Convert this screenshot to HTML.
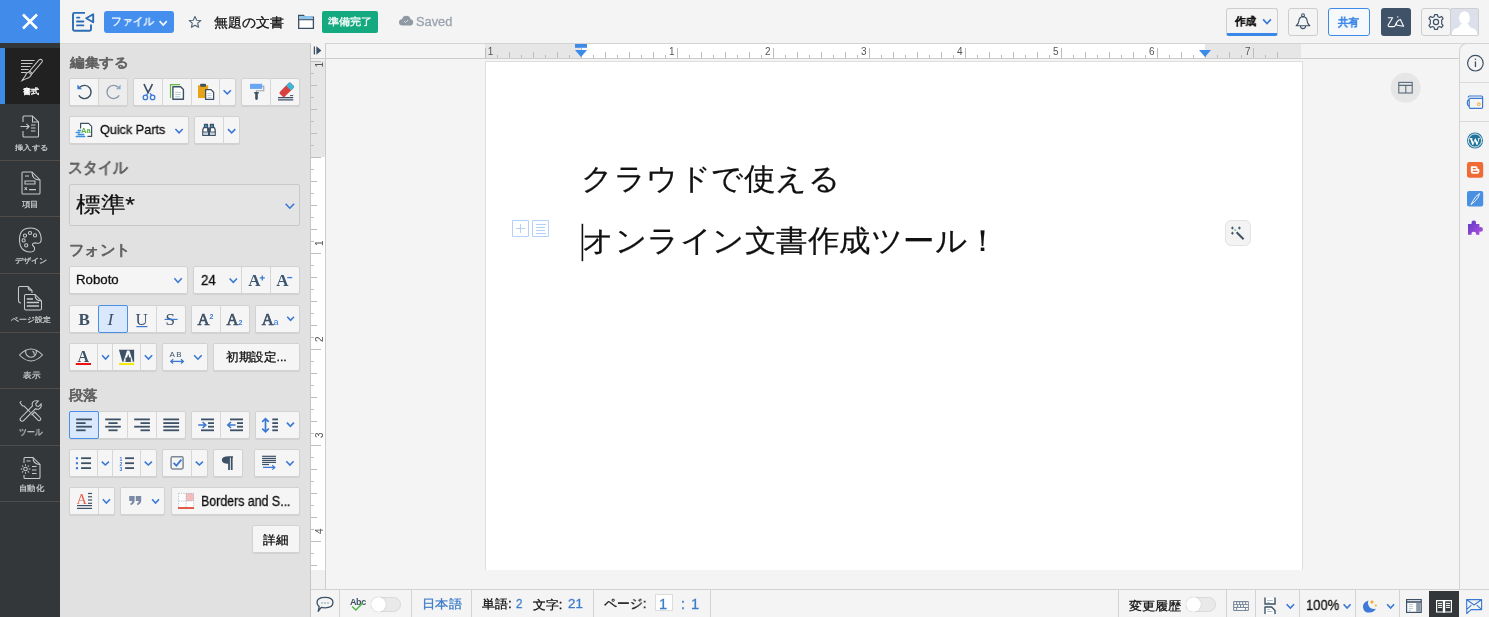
<!DOCTYPE html><html><head><meta charset="utf-8"><style>
*{box-sizing:border-box;margin:0;padding:0}
html,body{width:1489px;height:617px;overflow:hidden;background:#f4f4f4;font-family:"Liberation Sans",sans-serif;position:relative}
.a{position:absolute}
.t{white-space:nowrap;line-height:1;transform-origin:0 0;will-change:transform}
.bd{-webkit-text-stroke:0.3px currentColor}
.nos{-webkit-text-stroke:0}
.bds{-webkit-text-stroke:0.15px currentColor}
.grp,.btn{background:#f5f5f5;border:1px solid #d2d2d2;border-radius:2px;box-shadow:0 1px 1px rgba(0,0,0,0.07)}
.act{background:#d9e8fc;border:1.5px solid #4a8fe6;border-radius:2px}
.tb{background:#f4f4f4;border:1px solid #cdcdcd;border-radius:3px}
</style></head><body>
<div class="a" style="left:0;top:0;width:1489px;height:44px;background:#f4f4f4;border-bottom:1px solid #d9d9d9"></div>
<div class="a" style="left:0;top:0;width:60px;height:43px;background:#418bea"></div>
<div class="a" style="left:104px;top:11px;width:70px;height:22px;background:#448fee;border-radius:3px"></div>
<div class="a" style="left:322px;top:11px;width:56px;height:22px;background:#14a97f;border-radius:2px"></div>
<div class="a tb" style="left:1226px;top:8px;width:52px;height:28px;border-bottom:3px solid #3a87e8"></div>
<div class="a tb" style="left:1288px;top:8px;width:30px;height:28px"></div>
<div class="a" style="left:1328px;top:8px;width:42px;height:28px;border:1.5px solid #3d8ae8;border-radius:3px;background:#f6f8fb"></div>
<div class="a" style="left:1381px;top:8px;width:30px;height:28px;background:#3f5267;border-radius:3px"></div>
<div class="a tb" style="left:1421px;top:8px;width:30px;height:28px"></div>
<div class="a" style="left:1450px;top:8px;width:29px;height:28px;background:#dbe0ea;border:1px solid #cfcfcf;border-radius:2px"></div>
<div class="a" style="left:0;top:43px;width:60px;height:574px;background:#33373a"></div>
<div class="a" style="left:0;top:48px;width:60px;height:56px;background:#212121"></div>
<div class="a" style="left:0;top:48px;width:5px;height:56px;background:#3d8be8"></div>
<div class="a" style="left:0;top:160px;width:60px;height:1px;background:#4f4c49"></div>
<div class="a" style="left:0;top:273px;width:60px;height:1px;background:#4f4c49"></div>
<div class="a" style="left:0;top:332px;width:60px;height:1px;background:#4f4c49"></div>
<div class="a" style="left:0;top:388px;width:60px;height:1px;background:#4f4c49"></div>
<div class="a" style="left:0;top:445px;width:60px;height:1px;background:#4f4c49"></div>
<div class="a" style="left:0;top:501px;width:60px;height:1px;background:#4f4c49"></div>
<div class="a" style="left:0;top:216px;width:60px;height:1px;background:#4f4c49"></div>
<div class="a" style="left:60px;top:44px;width:251px;height:573px;background:#e1e1e1;border-right:1px solid #c6c6c6"></div>
<div class="a grp" style="left:69px;top:78px;width:59px;height:28px;"></div><div class="a" style="left:99px;top:79px;width:28px;height:26px;background:#ececec"></div><div class="a" style="left:98px;top:78px;width:1px;height:28px;background:#d6d6d6"></div>
<div class="a grp" style="left:133px;top:78px;width:103px;height:28px;"></div><div class="a" style="left:162px;top:78px;width:1px;height:28px;background:#d6d6d6"></div><div class="a" style="left:191px;top:78px;width:1px;height:28px;background:#d6d6d6"></div><div class="a" style="left:219px;top:78px;width:1px;height:28px;background:#d6d6d6"></div>
<div class="a grp" style="left:241px;top:78px;width:59px;height:28px;"></div><div class="a" style="left:270px;top:78px;width:1px;height:28px;background:#d6d6d6"></div>
<div class="a btn" style="left:69px;top:116px;width:120px;height:28px;"></div>
<div class="a grp" style="left:194px;top:116px;width:46px;height:28px;"></div><div class="a" style="left:223px;top:116px;width:1px;height:28px;background:#d6d6d6"></div>
<div class="a" style="left:69px;top:184px;width:231px;height:42px;background:#e4e4e4;border:1px solid #c9c9c9;border-radius:2px"></div>
<div class="a btn" style="left:69px;top:266px;width:119px;height:28px;"></div>
<div class="a grp" style="left:193px;top:266px;width:107px;height:28px;"></div><div class="a" style="left:241px;top:266px;width:1px;height:28px;background:#d6d6d6"></div><div class="a" style="left:270px;top:266px;width:1px;height:28px;background:#d6d6d6"></div>
<div class="a grp" style="left:69px;top:305px;width:117px;height:28px;"></div><div class="a" style="left:98px;top:305px;width:1px;height:28px;background:#d6d6d6"></div><div class="a" style="left:127px;top:305px;width:1px;height:28px;background:#d6d6d6"></div><div class="a" style="left:156px;top:305px;width:1px;height:28px;background:#d6d6d6"></div><div class="a act" style="left:98px;top:305px;width:30px;height:28px"></div>
<div class="a grp" style="left:191px;top:305px;width:59px;height:28px;"></div><div class="a" style="left:220px;top:305px;width:1px;height:28px;background:#d6d6d6"></div>
<div class="a btn" style="left:255px;top:305px;width:45px;height:28px;"></div>
<div class="a grp" style="left:69px;top:343px;width:88px;height:28px;"></div><div class="a" style="left:97px;top:343px;width:1px;height:28px;background:#d6d6d6"></div><div class="a" style="left:112px;top:343px;width:1px;height:28px;background:#d6d6d6"></div><div class="a" style="left:140px;top:343px;width:1px;height:28px;background:#d6d6d6"></div>
<div class="a btn" style="left:162px;top:343px;width:46px;height:28px;"></div>
<div class="a btn" style="left:213px;top:343px;width:87px;height:28px;"></div>
<div class="a grp" style="left:69px;top:411px;width:117px;height:28px;"></div><div class="a" style="left:98px;top:411px;width:1px;height:28px;background:#d6d6d6"></div><div class="a" style="left:127px;top:411px;width:1px;height:28px;background:#d6d6d6"></div><div class="a" style="left:156px;top:411px;width:1px;height:28px;background:#d6d6d6"></div><div class="a act" style="left:69px;top:411px;width:30px;height:28px"></div>
<div class="a grp" style="left:191px;top:411px;width:59px;height:28px;"></div><div class="a" style="left:220px;top:411px;width:1px;height:28px;background:#d6d6d6"></div>
<div class="a btn" style="left:255px;top:411px;width:45px;height:28px;"></div>
<div class="a grp" style="left:69px;top:449px;width:88px;height:28px;"></div><div class="a" style="left:97px;top:449px;width:1px;height:28px;background:#d6d6d6"></div><div class="a" style="left:112px;top:449px;width:1px;height:28px;background:#d6d6d6"></div><div class="a" style="left:140px;top:449px;width:1px;height:28px;background:#d6d6d6"></div>
<div class="a grp" style="left:162px;top:449px;width:46px;height:28px;"></div><div class="a" style="left:191px;top:449px;width:1px;height:28px;background:#d6d6d6"></div>
<div class="a btn" style="left:213px;top:449px;width:30px;height:28px;"></div>
<div class="a btn" style="left:254px;top:449px;width:46px;height:28px;"></div>
<div class="a grp" style="left:69px;top:487px;width:46px;height:28px;"></div><div class="a" style="left:98px;top:487px;width:1px;height:28px;background:#d6d6d6"></div>
<div class="a btn" style="left:120px;top:487px;width:45px;height:28px;"></div>
<div class="a btn" style="left:171px;top:487px;width:129px;height:28px;"></div>
<div class="a btn" style="left:252px;top:525px;width:48px;height:28px;"></div>
<div class="a" style="left:311px;top:43px;width:1149px;height:16px;background:#f4f4f4;border-top:1px solid #d3d3d3;border-bottom:1px solid #cdcdcd"></div>
<div class="a" style="left:485px;top:44px;width:96px;height:14px;background:#e6e6e6"></div>
<div class="a" style="left:581px;top:44px;width:624px;height:14px;background:#fff"></div>
<div class="a" style="left:1205px;top:44px;width:96px;height:14px;background:#e6e6e6"></div>
<div class="a" style="left:311px;top:59px;width:15px;height:530px;background:#f0f0f0;border-right:1px solid #cdcdcd"></div>
<div class="a" style="left:311px;top:61px;width:14px;height:96px;background:#e6e6e6"></div>
<div class="a" style="left:311px;top:157px;width:14px;height:413px;background:#fff"></div>
<div class="a" style="left:311px;top:43px;width:15px;height:16px;background:#f4f4f4;border-right:1px solid #cdcdcd;border-bottom:1px solid #cdcdcd"></div>
<div class="a" style="left:485px;top:61px;width:818px;height:509px;background:#fff;border:1px solid #dedede;border-bottom:none"></div>
<div class="a" style="left:1459px;top:43px;width:30px;height:547px;background:#f4f4f4;border-left:1px solid #d3d3d3;border-top:1px solid #d3d3d3;border-top-left-radius:8px"></div>
<div class="a" style="left:1460px;top:82px;width:29px;height:1px;background:#d9d9d9"></div>
<div class="a" style="left:1460px;top:121px;width:29px;height:1px;background:#d9d9d9"></div>
<div class="a" style="left:311px;top:589px;width:1178px;height:28px;background:#f4f4f4;border-top:1px solid #d3d3d3"></div>
<div class="a" style="left:339px;top:590px;width:1px;height:27px;background:#d3d3d3"></div>
<div class="a" style="left:411px;top:590px;width:1px;height:27px;background:#d3d3d3"></div>
<div class="a" style="left:471px;top:590px;width:1px;height:27px;background:#d3d3d3"></div>
<div class="a" style="left:593px;top:590px;width:1px;height:27px;background:#d3d3d3"></div>
<div class="a" style="left:710px;top:590px;width:1px;height:27px;background:#d3d3d3"></div>
<div class="a" style="left:1118px;top:590px;width:1px;height:27px;background:#d3d3d3"></div>
<div class="a" style="left:1226px;top:590px;width:1px;height:27px;background:#d3d3d3"></div>
<div class="a" style="left:1255px;top:590px;width:1px;height:27px;background:#d3d3d3"></div>
<div class="a" style="left:1299px;top:590px;width:1px;height:27px;background:#d3d3d3"></div>
<div class="a" style="left:1355px;top:590px;width:1px;height:27px;background:#d3d3d3"></div>
<div class="a" style="left:1399px;top:590px;width:1px;height:27px;background:#d3d3d3"></div>
<div class="a" style="left:1429px;top:591px;width:30px;height:26px;background:#33373a"></div>
<div class="a" style="left:655px;top:594px;width:18px;height:17px;background:#fff;border:1px solid #dcdcdc"></div>
<div class="a" style="left:371px;top:597px;width:30px;height:15px;background:#e9e9e9;border:1px solid #d9d9d9;border-radius:8px"></div>
<div class="a" style="left:371px;top:597px;width:15px;height:15px;background:#fff;border-radius:50%;box-shadow:0 0 1px rgba(0,0,0,0.3)"></div>
<div class="a" style="left:1186px;top:597px;width:30px;height:15px;background:#e9e9e9;border:1px solid #d9d9d9;border-radius:8px"></div>
<div class="a" style="left:1186px;top:597px;width:15px;height:15px;background:#fff;border-radius:50%;box-shadow:0 0 1px rgba(0,0,0,0.3)"></div>
<div class="a" style="left:1225px;top:220px;width:26px;height:26px;background:#f3f3f3;border:1px solid #e3e3e3;border-radius:6px"></div>
<svg class="a" style="left:0;top:0;will-change:transform" width="1489" height="617" viewBox="0 0 1489 617"><path d="M23 14.5 L37 28.5 M37 14.5 L23 28.5" stroke="#fff" stroke-width="2.6"/><g fill="none" stroke="#2b6cb4" stroke-width="1.9"><path d="M85 12.9 H74.4 Q73 12.9 73 14.3 V29.3 Q73 30.7 74.4 30.7 H89.6 Q91 30.7 91 29.3 V24.6"/><path d="M86.2 18.2 L93.2 14.2 V22.2 Z" stroke-linejoin="round"/><path d="M77 17.6 H79.4 M77 21.5 H83.4 M77 25.4 H83.4" stroke-linecap="round"/></g><polyline points="159.6,21.1 163.2,25.0 166.8,21.1" fill="none" stroke="#fff" stroke-width="1.6"/><path d="M195 16.4 L196.7 20.2 L200.8 20.5 L197.7 23.2 L198.6 27.3 L195 25.2 L191.4 27.3 L192.3 23.2 L189.2 20.5 L193.3 20.2 Z" fill="none" stroke="#4d6378" stroke-width="1.1" stroke-linejoin="round"/><path d="M298.7 15.5 H303.5 L305 17.1 H313.4 V28.3 H298.7 Z" fill="#fff" stroke="#3b4d63" stroke-width="1.3"/><rect x="299.4" y="16.2" width="13.3" height="3" fill="#8ac6f0"/><path d="M298.7 19.7 H313.4" stroke="#3b4d63" stroke-width="1.1"/><path d="M402.6 25.4 Q399 25.4 399 22.2 Q399 19.4 402 19.2 Q403 15.8 406.4 15.8 Q409.8 15.8 410.5 19.2 Q413.2 19.5 413.2 22.3 Q413.2 25.4 410.2 25.4 Z" fill="#8e99a4"/><polyline points="404.2,21.2 405.6,22.6 408.2,20" fill="none" stroke="#eaeaea" stroke-width="0.9"/><polyline points="1263.1,19.400000000000002 1267.0,23.599999999999998 1270.9,19.400000000000002" fill="none" stroke="#3a78d4" stroke-width="1.7"/><g fill="none" stroke="#3d5166" stroke-width="1.1" stroke-linejoin="round"><path d="M1303 16.6 Q1299 16.8 1298.8 21.4 Q1298.6 24 1296.2 25.8 H1309.8 Q1307.4 24 1307.2 21.4 Q1307 16.8 1303 16.6 Z"/><path d="M1300.4 26 A2.6 2.6 0 0 0 1305.6 26"/><circle cx="1303" cy="15.2" r="1.4"/></g><g fill="none" stroke="#fff" stroke-width="1.1" stroke-linejoin="round" stroke-linecap="round"><path d="M1388.2 17.8 H1392.6 L1388.2 25 Q1387.8 26.6 1389.6 26.6 H1393.6 Q1394.8 26.6 1395.4 25.2 L1396.6 22.4"/><path d="M1396 24.6 Q1396.6 20.6 1400.4 19.4 L1403.6 26.2 Q1400 25.8 1396.6 25"/></g><circle cx="1397.8" cy="17" r="0.7" fill="#fff"/><g fill="none" stroke="#3d5166" stroke-width="1.2" stroke-linejoin="round"><circle cx="1436" cy="22" r="2.6"/><path d="M1434.6 14.6 H1437.4 L1437.9 16.7 L1439.6 17.5 L1441.5 16.4 L1443.1 18.6 L1441.6 20.2 L1441.8 22 L1441.6 23.8 L1443.1 25.4 L1441.5 27.6 L1439.6 26.5 L1437.9 27.3 L1437.4 29.4 H1434.6 L1434.1 27.3 L1432.4 26.5 L1430.5 27.6 L1428.9 25.4 L1430.4 23.8 L1430.2 22 L1430.4 20.2 L1428.9 18.6 L1430.5 16.4 L1432.4 17.5 L1434.1 16.7 Z"/></g><ellipse cx="1464.5" cy="18" rx="5.4" ry="6.8" fill="#fff"/><path d="M1451.6 35 Q1452 28.6 1458.6 27.6 L1461 24 H1468 L1470.4 27.6 Q1477 28.6 1477.4 35 Z" fill="#fff"/><g fill="none" stroke="#c9c9c9" stroke-width="1.05"><path d="M21 60.4 H34.6 M21 63.4 H32.6 M21 66.4 H30.6 M21 69.4 H28.6 M21 72.4 H26.6"/><path d="M40.4 59.2 Q42.8 59.4 42.2 61.8 L31.4 74.6 L28.6 72.2 L39 60 Z"/><path d="M29.8 71.2 L32.4 73.6 M28.6 72.2 Q26.2 72.4 25.6 75.4 L22 80.6 L26.6 78.4 Q30 78 31.4 74.6"/></g><g fill="none" stroke="#c9c9c9" stroke-width="1.05"><path d="M23 122 V117 Q23 116 24 116 H32.5 L38.5 122 V136 Q38.5 137 37.5 137 H24 Q23 137 23 136 V131"/><path d="M32.5 116 V122 H38.5"/><path d="M20.5 126.5 H29 M26.4 123.8 L29.2 126.5 L26.4 129.2 M31 125 H35.5 M31 128 H35.5 M31 131 H35.5"/></g><g fill="none" stroke="#c9c9c9" stroke-width="1.05"><path d="M22 173 Q22 172 23 172 H32 L40 180 V193 Q40 194 39 194 H23 Q22 194 22 193 Z"/><path d="M32 172 Q32 180 40 180"/><path d="M25 176 H29 M25 181 H35 V184 H25 Z M24.6 187.4 L27 189.8 M27 187.4 L24.6 189.8 M29 189.6 H36"/></g><g fill="none" stroke="#c9c9c9" stroke-width="1.05"><path d="M30.5 228 Q19.5 228 19.5 239.5 Q19.5 251.5 30 252 Q34 252 34.6 249.5 Q35 247 33 245.8 Q31.6 244.2 33.6 243.2 Q35 242.6 37 243.2 Q41 244 41.2 239.5 Q41 228 30.5 228 Z"/><circle cx="25" cy="235.6" r="1.6"/><circle cx="30" cy="233" r="1.6"/><circle cx="35" cy="235.4" r="1.6"/><circle cx="23.6" cy="240.4" r="1.6"/><circle cx="26.2" cy="245.4" r="1.6"/></g><g fill="none" stroke="#c9c9c9" stroke-width="1.05"><path d="M21 303 Q18.5 303 18.5 300.5 V288 Q18.5 286.5 20 286.5 H28 L32 290.5 V293"/><path d="M28 286.5 Q28 290.5 32 290.5"/><path d="M24.5 296 Q24.5 294.5 26 294.5 H35 L41.5 301 V308.5 Q41.5 310 40 310 H26 Q24.5 310 24.5 308.5 Z"/><path d="M35 294.5 Q35 301 41.5 301"/><path d="M26.8 299 H33 M26.8 302.5 H39 M26.8 306 H39" stroke-width="1.6"/></g><g fill="none" stroke="#c9c9c9" stroke-width="1.05"><path d="M19.5 355 Q31 343 42.5 355 Q31 367 19.5 355 Z"/><path d="M36.2 350.4 A5.4 5.4 0 1 1 25.8 350.4"/><path d="M32.6 351 Q34.6 352.4 34.2 354.8"/></g><g fill="none" stroke="#c9c9c9" stroke-width="1.05"><path d="M21.5 401 L20 402.5 L22.5 406 L24.1 406.1 L30.5 412.5 M32.3 414.3 L37.7 419.9 Q39.1 421.3 40.3 420.1 Q41.5 418.9 40.1 417.5 L34.7 412.1 L31.5 415.1"/><path d="M38.3 401.1 L35.7 403.7 L36.3 405.9 L38.5 406.5 L41.1 403.9 Q41.9 407.7 38.9 408.9 Q37.1 409.5 35.5 408.7 L23.9 420.3 Q22.1 422.1 20.7 420.7 Q19.3 419.3 21.1 417.5 L32.5 405.9 Q31.7 404.1 32.5 402.5 Q34.1 400.1 38.3 401.1 Z"/></g><g fill="none" stroke="#c9c9c9" stroke-width="1.05"><path d="M24 463 V458.5 Q24 457.5 25 457.5 H33 L40 464.5 V477.5 Q40 478.5 39 478.5 H25 Q24 478.5 24 477.5 V475"/><path d="M33 457.5 Q33 464.5 40 464.5"/><path d="M26.5 461 H30.5 M32 466.5 H36.5 M32 470 H36.5 M32 473.5 H36.5"/><circle cx="25.5" cy="469" r="1.8"/><path d="M25.5 464.2 V465.8 M25.5 472.2 V473.8 M20.7 469 H22.3 M28.7 469 H30.3 M22.1 465.6 L23.2 466.7 M27.8 471.3 L28.9 472.4 M22.1 472.4 L23.2 471.3 M27.8 466.7 L28.9 465.6"/></g><path d="M79.8 87.3 A6.6 6.6 0 1 1 78.8 95.4" fill="none" stroke="#3d5166" stroke-width="1.4"/><path d="M77.4 84.6 V89.2 H82 Z" fill="#3a78d4"/><path d="M118.2 87.3 A6.6 6.6 0 1 0 119.2 95.4" fill="none" stroke="#8c98a5" stroke-width="1.3"/><path d="M120.6 84.6 V89.2 H116 Z" fill="#8fa8cf"/><path d="M144 84 Q146.5 90 148.6 93.2 M152.4 84 Q150 90 147.4 93.2" fill="none" stroke="#3d5166" stroke-width="1.7"/><circle cx="145.4" cy="97.4" r="2.2" fill="none" stroke="#3a78d4" stroke-width="1.3"/><circle cx="152.6" cy="97.4" r="2.2" fill="none" stroke="#3a78d4" stroke-width="1.3"/><path d="M146.4 95.4 L148 93 M151.6 95.4 L150 93" stroke="#3a78d4" stroke-width="1.2"/><path d="M170.5 98 V84.6 H180" fill="none" stroke="#66b946" stroke-width="1.2"/><path d="M172.9 86.8 H180.6 L183.4 89.6 V99.3 H172.9 Z" fill="#fff" stroke="#3d5166" stroke-width="1.4" stroke-linejoin="round"/><path d="M175.2 92.4 H181 M175.2 94.6 H181 M175.2 96.8 H180" stroke="#a9bcc6" stroke-width="0.9"/><rect x="198" y="85.3" width="10.2" height="12.7" fill="#e8a317"/><rect x="200.2" y="83.8" width="5.8" height="3" rx="0.8" fill="#3d5166"/><path d="M205.6 89.6 H211 L213.6 92.2 V99.4 H205.6 Z" fill="#fff" stroke="#3d5166" stroke-width="1.3" stroke-linejoin="round"/><path d="M207.4 93.6 H211.6 M207.4 95.6 H211.6 M207.4 97.6 H211.6" stroke="#a9bcc6" stroke-width="0.8"/><polyline points="223.6,90.3 227.25,93.9 230.9,90.3" fill="none" stroke="#3a78d4" stroke-width="1.6"/><rect x="250" y="83.8" width="12.2" height="5.1" fill="#6aa6f4"/><path d="M262.2 86.4 H263.8 V90.8 H256.5 V92.2" fill="none" stroke="#9aa6b2" stroke-width="1.1"/><path d="M254.2 92 H258.8 V93.6 H257.8 V99 Q256.5 101 255.2 99 V93.6 H254.2 Z" fill="#3d5166"/><g transform="rotate(-45 286.6 89.8)"><rect x="279" y="86.4" width="15.4" height="7" rx="1.6" fill="#d94141"/><rect x="289.2" y="86.4" width="5.2" height="7" rx="1.2" fill="#3ab7d9"/></g><path d="M278 97.6 H293.2 M278 99.8 H293.2" stroke="#3d5166" stroke-width="1.2"/><path d="M290 95.6 H293.2" stroke="#3d5166" stroke-width="1"/><path d="M80.6 123.4 H88.6 L91.6 126.4 V136.4 H80.6 Z" fill="#fff" stroke="none"/><path d="M80.6 128.4 V123.4 H88.6 L91.6 126.4 V136.4 H87.4" fill="none" stroke="#3d5166" stroke-width="1.2" stroke-linejoin="round"/><text x="81" y="132.9" font-family="Liberation Sans" font-weight="bold" font-size="7.6" fill="#5cb446">Aa</text><path d="M78.2 130.5 H80.8 M76.2 132.5 H79.8 M78.2 134.5 H83.8 M76.2 136.5 H84.8" stroke="#3a90e0" stroke-width="1.3" stroke-linecap="round"/><polyline points="175.4,129.0 179.05,132.8 182.70000000000002,129.0" fill="none" stroke="#3a78d4" stroke-width="1.6"/><g stroke="#3d5166" stroke-width="1.3" stroke-linejoin="round"><rect x="204.5" y="124.5" width="3" height="2.8" fill="#36b6e0"/><rect x="210.4" y="124.5" width="3" height="2.8" fill="#36b6e0"/><path d="M203.6 127.6 H207.8 V131 H208.6 V135.4 H202.8 V130 Z" fill="#fff"/><path d="M214.4 127.6 H210.2 V131 H209.4 V135.4 H215.2 V130 Z" fill="#fff"/></g><rect x="207.6" y="127.6" width="2.8" height="3.4" fill="#3d5166"/><rect x="203.6" y="132.6" width="4.2" height="2.2" fill="#c3cfd5"/><rect x="210.2" y="132.6" width="4.2" height="2.2" fill="#c3cfd5"/><path d="M202.8 132 H208.6 M209.4 132 H215.2" stroke="#3d5166" stroke-width="1.2"/><polyline points="228.0,129.1 231.65,132.8 235.3,129.1" fill="none" stroke="#3a78d4" stroke-width="1.6"/><polyline points="285.6,203.79999999999998 289.85,208.20000000000002 294.09999999999997,203.79999999999998" fill="none" stroke="#3a78d4" stroke-width="1.6"/><polyline points="174.4,278.20000000000005 178.05,282.4 181.70000000000002,278.20000000000005" fill="none" stroke="#3a78d4" stroke-width="1.6"/><polyline points="229.6,278.5 233.3,282.29999999999995 237.0,278.5" fill="none" stroke="#3a78d4" stroke-width="1.6"/><text x="248.2" y="286.2" font-family="Liberation Serif" font-weight="bold" font-size="17" fill="#3d5670">A</text><path d="M262.3 275.4 V280.4 M259.8 277.9 H264.8" stroke="#3a78d4" stroke-width="1.3"/><text x="276.2" y="286.2" font-family="Liberation Serif" font-weight="bold" font-size="17" fill="#3d5670">A</text><path d="M287.2 277.6 H292.2" stroke="#3a78d4" stroke-width="1.3"/><text x="78.4" y="325.2" font-family="Liberation Serif" font-weight="bold" font-size="17" fill="#3d5166">B</text><text x="107.4" y="325.2" font-family="Liberation Serif" font-style="italic" font-size="17.5" fill="#3d5166">I</text><text x="135.6" y="325.2" font-family="Liberation Serif" font-size="17" fill="#3d5166">U</text><path d="M136.4 326.6 H147.4" stroke="#3a78d4" stroke-width="1.2"/><text x="165.4" y="325.2" font-family="Liberation Serif" font-size="17" fill="#3d5166">S</text><path d="M164.6 319.4 H177.6" stroke="#3a78d4" stroke-width="1.2"/><text x="197.6" y="325.2" font-family="Liberation Serif" font-size="16.5" fill="#3d5166" stroke="#3d5166" stroke-width="0.7">A</text><text x="209.6" y="319" font-family="Liberation Sans" font-weight="bold" font-size="7" fill="#3a78d4">2</text><text x="226.6" y="325.2" font-family="Liberation Serif" font-size="16.5" fill="#3d5166" stroke="#3d5166" stroke-width="0.7">A</text><text x="238.6" y="325.4" font-family="Liberation Sans" font-weight="bold" font-size="7" fill="#3a78d4">2</text><text x="261.8" y="325.2" font-family="Liberation Serif" font-size="16.5" fill="#3d5166" stroke="#3d5166" stroke-width="0.7">A</text><text x="273.6" y="325.4" font-family="Liberation Sans" font-size="9" fill="#3a78d4">a</text><polyline points="287.20000000000005,316.8 290.6,320.4 294.0,316.8" fill="none" stroke="#3a78d4" stroke-width="1.6"/><text x="77.6" y="361.8" font-family="Liberation Serif" font-weight="bold" font-size="16" fill="#3d5166">A</text><rect x="75.8" y="363" width="15.2" height="2" fill="#ee1111"/><polyline points="102.1,355.3 105.55,359.0 109.0,355.3" fill="none" stroke="#3a78d4" stroke-width="1.6"/><path d="M118.9 349.8 H134.1 V361.8 H122.4 Z" fill="#3d5166"/><path d="M123.4 361.8 L127 350.6 H129.4 L133 361.8 H130.6 L128.2 354 L125.8 361.8 Z" fill="#f5f5f5"/><path d="M125.6 357.6 H130.8 V361.8 H125.6 Z" fill="#3d5166"/><rect x="119" y="363" width="15.2" height="2" fill="#f5e90a"/><polyline points="144.79999999999998,355.3 148.5,359.0 152.20000000000002,355.3" fill="none" stroke="#3a78d4" stroke-width="1.6"/><text x="169.6" y="356.8" font-family="Liberation Sans" font-size="8" fill="#3d5166" letter-spacing="1.2">AB</text><path d="M171 361.4 H183.2" stroke="#3a78d4" stroke-width="1.3"/><path d="M173.2 359.2 L170.8 361.4 L173.2 363.6 M181 359.2 L183.4 361.4 L181 363.6" fill="none" stroke="#3a78d4" stroke-width="1.3"/><polyline points="194.1,355.20000000000005 197.9,359.2 201.70000000000002,355.20000000000005" fill="none" stroke="#3a78d4" stroke-width="1.6"/><path d="M76.2 419.4 H91.9" stroke="#3d5166" stroke-width="1.8"/><path d="M76.2 423.1 H85.6" stroke="#3d5166" stroke-width="1.8"/><path d="M76.2 426.7 H91.9" stroke="#3d5166" stroke-width="1.8"/><path d="M76.2 430.3 H85.6" stroke="#3d5166" stroke-width="1.8"/><path d="M105.2 419.4 H120.8" stroke="#3d5166" stroke-width="1.8"/><path d="M108.4 423.1 H117.6" stroke="#3d5166" stroke-width="1.8"/><path d="M105.2 426.7 H120.8" stroke="#3d5166" stroke-width="1.8"/><path d="M108.4 430.3 H117.6" stroke="#3d5166" stroke-width="1.8"/><path d="M134.2 419.4 H149.9" stroke="#3d5166" stroke-width="1.8"/><path d="M140.5 423.1 H149.9" stroke="#3d5166" stroke-width="1.8"/><path d="M134.2 426.7 H149.9" stroke="#3d5166" stroke-width="1.8"/><path d="M140.5 430.3 H149.9" stroke="#3d5166" stroke-width="1.8"/><path d="M163.3 419.4 H179.1" stroke="#3d5166" stroke-width="1.8"/><path d="M163.3 423.1 H179.1" stroke="#3d5166" stroke-width="1.8"/><path d="M163.3 426.7 H179.1" stroke="#3d5166" stroke-width="1.8"/><path d="M163.3 430.3 H179.1" stroke="#3d5166" stroke-width="1.8"/><path d="M201 419.4 H214" stroke="#3d5166" stroke-width="1.8"/><path d="M208 423.1 H214" stroke="#3d5166" stroke-width="1.8"/><path d="M208 426.7 H214" stroke="#3d5166" stroke-width="1.8"/><path d="M201 430.3 H214" stroke="#3d5166" stroke-width="1.8"/><path d="M198.2 425 H205.6 M202.6 422 L205.8 425 L202.6 428" fill="none" stroke="#3a78d4" stroke-width="1.6"/><path d="M230 419.4 H243" stroke="#3d5166" stroke-width="1.8"/><path d="M237 423.1 H243" stroke="#3d5166" stroke-width="1.8"/><path d="M237 426.7 H243" stroke="#3d5166" stroke-width="1.8"/><path d="M230 430.3 H243" stroke="#3d5166" stroke-width="1.8"/><path d="M235.6 425 H228 M231 422 L227.8 425 L231 428" fill="none" stroke="#3a78d4" stroke-width="1.6"/><path d="M265.5 419 V431.4 M262.2 421.8 L265.5 418.6 L268.8 421.8 M262.2 428.6 L265.5 431.8 L268.8 428.6" fill="none" stroke="#3a78d4" stroke-width="1.7"/><path d="M272.3 419.4 H278" stroke="#3d5166" stroke-width="1.8"/><path d="M272.3 423.1 H278" stroke="#3d5166" stroke-width="1.8"/><path d="M272.3 426.7 H278" stroke="#3d5166" stroke-width="1.8"/><path d="M272.3 430.3 H278" stroke="#3d5166" stroke-width="1.8"/><polyline points="286.90000000000003,422.6 290.4,426.4 293.9,422.6" fill="none" stroke="#3a78d4" stroke-width="1.6"/><rect x="75.9" y="457.2" width="2.1" height="2.1" fill="#3a78d4"/><rect x="75.9" y="462.2" width="2.1" height="2.1" fill="#3a78d4"/><rect x="75.9" y="467.1" width="2.1" height="2.1" fill="#3a78d4"/><path d="M81.1 458.2 H91" stroke="#3d5166" stroke-width="1.8"/><path d="M81.1 463.2 H91" stroke="#3d5166" stroke-width="1.8"/><path d="M81.1 468.1 H91" stroke="#3d5166" stroke-width="1.8"/><polyline points="101.8,461.6 105.35,465.0 108.9,461.6" fill="none" stroke="#3a78d4" stroke-width="1.6"/><text x="119.4" y="461.2" font-family="Liberation Sans" font-weight="bold" font-size="5" fill="#3a78d4">1</text><text x="119.4" y="466" font-family="Liberation Sans" font-weight="bold" font-size="5" fill="#3a78d4">2</text><text x="119.4" y="470.6" font-family="Liberation Sans" font-weight="bold" font-size="5" fill="#3a78d4">3</text><path d="M125.1 458.2 H134" stroke="#3d5166" stroke-width="1.8"/><path d="M125.1 463.2 H134" stroke="#3d5166" stroke-width="1.8"/><path d="M125.1 468.1 H134" stroke="#3d5166" stroke-width="1.8"/><polyline points="144.7,461.6 148.3,465.0 151.9,461.6" fill="none" stroke="#3a78d4" stroke-width="1.6"/><rect x="171.1" y="456.8" width="12" height="12.2" rx="1.4" fill="none" stroke="#7d8894" stroke-width="1.5"/><path d="M173.6 462.8 L176.4 465.6 L181.4 459.6" fill="none" stroke="#3a78d4" stroke-width="1.8"/><polyline points="195.79999999999998,461.6 199.35,465.0 202.9,461.6" fill="none" stroke="#3a78d4" stroke-width="1.6"/><path d="M228.6 456.2 H233 V457.8 H232.6 V470 H230.8 V457.8 H229.9 V470 H228.1 V463.8 Q221.8 463.6 221.8 460 Q221.8 456.2 228.6 456.2 Z" fill="#3d5166"/><path d="M262.1 456.3 H276" stroke="#3d5166" stroke-width="1.2"/><path d="M262.1 458.4 H276" stroke="#3d5166" stroke-width="1.2"/><path d="M262.1 460.4 H276" stroke="#3d5166" stroke-width="1.2"/><path d="M262.1 462.4 H276" stroke="#3d5166" stroke-width="1.2"/><path d="M262.1 464.5 H269" stroke="#3d5166" stroke-width="1.2"/><path d="M263 467.4 H274.6 M272.2 465.2 L274.8 467.4 L272.2 469.6" fill="none" stroke="#3a78d4" stroke-width="1.2"/><polyline points="286.3,461.20000000000005 289.95,465.0 293.59999999999997,461.20000000000005" fill="none" stroke="#3a78d4" stroke-width="1.6"/><text x="76.4" y="503.6" font-family="Liberation Serif" font-size="14.5" fill="#e8604c">A</text><path d="M88 493.5 H92.1" stroke="#3d5166" stroke-width="1.2"/><path d="M88 496.8 H92.1" stroke="#3d5166" stroke-width="1.2"/><path d="M88 500 H92.1" stroke="#3d5166" stroke-width="1.2"/><path d="M88 503.3 H92.1" stroke="#3d5166" stroke-width="1.2"/><path d="M77 505.6 H92.1" stroke="#3d5166" stroke-width="1.2"/><path d="M77 508.4 H92.1" stroke="#3d5166" stroke-width="1.2"/><polyline points="102.8,499.3 106.4,503.0 110.0,499.3" fill="none" stroke="#3a78d4" stroke-width="1.6"/><path d="M129.2 496 H134.6 V500.6 Q134.6 504 131 505.2 L130.2 503.8 Q132 503 132.2 501 H129.2 Z M135.8 496 H141.2 V500.6 Q141.2 504 137.6 505.2 L136.8 503.8 Q138.6 503 138.8 501 H135.8 Z" fill="#7a8aa6"/><polyline points="152.1,499.3 155.55,503.0 159.0,499.3" fill="none" stroke="#3a78d4" stroke-width="1.6"/><rect x="178.4" y="493.2" width="15.4" height="15.4" fill="#fff"/><rect x="186" y="493.2" width="7.8" height="7.8" fill="#f3bcbc"/><path d="M178.6 493.4 H193.6 V508 M178.6 493.4 V508 M186 493.4 V508 M178.6 501 H193.6" fill="none" stroke="#9fb3bd" stroke-width="0.8" stroke-dasharray="1.2 1.2"/><rect x="178" y="507" width="16" height="2" fill="#e55b4a"/><rect x="485" y="48" width="1" height="10" fill="#bdbdbd"/><rect x="497" y="55" width="1" height="3" fill="#bdbdbd"/><rect x="509" y="52" width="1" height="6" fill="#bdbdbd"/><rect x="521" y="55" width="1" height="3" fill="#bdbdbd"/><rect x="533" y="52" width="1" height="6" fill="#bdbdbd"/><rect x="545" y="55" width="1" height="3" fill="#bdbdbd"/><rect x="557" y="52" width="1" height="6" fill="#bdbdbd"/><rect x="569" y="55" width="1" height="3" fill="#bdbdbd"/><rect x="581" y="48" width="1" height="10" fill="#bdbdbd"/><rect x="593" y="55" width="1" height="3" fill="#bdbdbd"/><rect x="605" y="52" width="1" height="6" fill="#bdbdbd"/><rect x="617" y="55" width="1" height="3" fill="#bdbdbd"/><rect x="629" y="52" width="1" height="6" fill="#bdbdbd"/><rect x="641" y="55" width="1" height="3" fill="#bdbdbd"/><rect x="653" y="52" width="1" height="6" fill="#bdbdbd"/><rect x="665" y="55" width="1" height="3" fill="#bdbdbd"/><rect x="677" y="48" width="1" height="10" fill="#bdbdbd"/><rect x="689" y="55" width="1" height="3" fill="#bdbdbd"/><rect x="701" y="52" width="1" height="6" fill="#bdbdbd"/><rect x="713" y="55" width="1" height="3" fill="#bdbdbd"/><rect x="725" y="52" width="1" height="6" fill="#bdbdbd"/><rect x="737" y="55" width="1" height="3" fill="#bdbdbd"/><rect x="749" y="52" width="1" height="6" fill="#bdbdbd"/><rect x="761" y="55" width="1" height="3" fill="#bdbdbd"/><rect x="773" y="48" width="1" height="10" fill="#bdbdbd"/><rect x="785" y="55" width="1" height="3" fill="#bdbdbd"/><rect x="797" y="52" width="1" height="6" fill="#bdbdbd"/><rect x="809" y="55" width="1" height="3" fill="#bdbdbd"/><rect x="821" y="52" width="1" height="6" fill="#bdbdbd"/><rect x="833" y="55" width="1" height="3" fill="#bdbdbd"/><rect x="845" y="52" width="1" height="6" fill="#bdbdbd"/><rect x="857" y="55" width="1" height="3" fill="#bdbdbd"/><rect x="869" y="48" width="1" height="10" fill="#bdbdbd"/><rect x="881" y="55" width="1" height="3" fill="#bdbdbd"/><rect x="893" y="52" width="1" height="6" fill="#bdbdbd"/><rect x="905" y="55" width="1" height="3" fill="#bdbdbd"/><rect x="917" y="52" width="1" height="6" fill="#bdbdbd"/><rect x="929" y="55" width="1" height="3" fill="#bdbdbd"/><rect x="941" y="52" width="1" height="6" fill="#bdbdbd"/><rect x="953" y="55" width="1" height="3" fill="#bdbdbd"/><rect x="965" y="48" width="1" height="10" fill="#bdbdbd"/><rect x="977" y="55" width="1" height="3" fill="#bdbdbd"/><rect x="989" y="52" width="1" height="6" fill="#bdbdbd"/><rect x="1001" y="55" width="1" height="3" fill="#bdbdbd"/><rect x="1013" y="52" width="1" height="6" fill="#bdbdbd"/><rect x="1025" y="55" width="1" height="3" fill="#bdbdbd"/><rect x="1037" y="52" width="1" height="6" fill="#bdbdbd"/><rect x="1049" y="55" width="1" height="3" fill="#bdbdbd"/><rect x="1061" y="48" width="1" height="10" fill="#bdbdbd"/><rect x="1073" y="55" width="1" height="3" fill="#bdbdbd"/><rect x="1085" y="52" width="1" height="6" fill="#bdbdbd"/><rect x="1097" y="55" width="1" height="3" fill="#bdbdbd"/><rect x="1109" y="52" width="1" height="6" fill="#bdbdbd"/><rect x="1121" y="55" width="1" height="3" fill="#bdbdbd"/><rect x="1133" y="52" width="1" height="6" fill="#bdbdbd"/><rect x="1145" y="55" width="1" height="3" fill="#bdbdbd"/><rect x="1157" y="48" width="1" height="10" fill="#bdbdbd"/><rect x="1169" y="55" width="1" height="3" fill="#bdbdbd"/><rect x="1181" y="52" width="1" height="6" fill="#bdbdbd"/><rect x="1193" y="55" width="1" height="3" fill="#bdbdbd"/><rect x="1205" y="52" width="1" height="6" fill="#bdbdbd"/><rect x="1217" y="55" width="1" height="3" fill="#bdbdbd"/><rect x="1229" y="52" width="1" height="6" fill="#bdbdbd"/><rect x="1241" y="55" width="1" height="3" fill="#bdbdbd"/><rect x="1253" y="48" width="1" height="10" fill="#bdbdbd"/><rect x="1265" y="55" width="1" height="3" fill="#bdbdbd"/><rect x="1277" y="52" width="1" height="6" fill="#bdbdbd"/><text x="674.5" y="54.9" text-anchor="end" font-family="Liberation Sans" font-size="10" fill="#555">1</text><text x="770.5" y="54.9" text-anchor="end" font-family="Liberation Sans" font-size="10" fill="#555">2</text><text x="866.5" y="54.9" text-anchor="end" font-family="Liberation Sans" font-size="10" fill="#555">3</text><text x="962.5" y="54.9" text-anchor="end" font-family="Liberation Sans" font-size="10" fill="#555">4</text><text x="1058.5" y="54.9" text-anchor="end" font-family="Liberation Sans" font-size="10" fill="#555">5</text><text x="1154.5" y="54.9" text-anchor="end" font-family="Liberation Sans" font-size="10" fill="#555">6</text><text x="1250.5" y="54.9" text-anchor="end" font-family="Liberation Sans" font-size="10" fill="#555">7</text><text x="487.8" y="54.9" font-family="Liberation Sans" font-size="10" fill="#555">1</text><rect x="575" y="44" width="12" height="3.8" fill="#3d8be8"/><path d="M575 50 H587 L581 57 Z" fill="#3d8be8"/><path d="M1199 50 H1211 L1205 57 Z" fill="#3d8be8"/><rect x="311" y="61" width="10" height="1" fill="#bdbdbd"/><rect x="311" y="73" width="3" height="1" fill="#bdbdbd"/><rect x="311" y="85" width="6" height="1" fill="#bdbdbd"/><rect x="311" y="97" width="3" height="1" fill="#bdbdbd"/><rect x="311" y="109" width="6" height="1" fill="#bdbdbd"/><rect x="311" y="121" width="3" height="1" fill="#bdbdbd"/><rect x="311" y="133" width="6" height="1" fill="#bdbdbd"/><rect x="311" y="145" width="3" height="1" fill="#bdbdbd"/><rect x="311" y="157" width="10" height="1" fill="#bdbdbd"/><rect x="311" y="169" width="3" height="1" fill="#bdbdbd"/><rect x="311" y="181" width="6" height="1" fill="#bdbdbd"/><rect x="311" y="193" width="3" height="1" fill="#bdbdbd"/><rect x="311" y="205" width="6" height="1" fill="#bdbdbd"/><rect x="311" y="217" width="3" height="1" fill="#bdbdbd"/><rect x="311" y="229" width="6" height="1" fill="#bdbdbd"/><rect x="311" y="241" width="3" height="1" fill="#bdbdbd"/><rect x="311" y="253" width="10" height="1" fill="#bdbdbd"/><rect x="311" y="265" width="3" height="1" fill="#bdbdbd"/><rect x="311" y="277" width="6" height="1" fill="#bdbdbd"/><rect x="311" y="289" width="3" height="1" fill="#bdbdbd"/><rect x="311" y="301" width="6" height="1" fill="#bdbdbd"/><rect x="311" y="313" width="3" height="1" fill="#bdbdbd"/><rect x="311" y="325" width="6" height="1" fill="#bdbdbd"/><rect x="311" y="337" width="3" height="1" fill="#bdbdbd"/><rect x="311" y="349" width="10" height="1" fill="#bdbdbd"/><rect x="311" y="361" width="3" height="1" fill="#bdbdbd"/><rect x="311" y="373" width="6" height="1" fill="#bdbdbd"/><rect x="311" y="385" width="3" height="1" fill="#bdbdbd"/><rect x="311" y="397" width="6" height="1" fill="#bdbdbd"/><rect x="311" y="409" width="3" height="1" fill="#bdbdbd"/><rect x="311" y="421" width="6" height="1" fill="#bdbdbd"/><rect x="311" y="433" width="3" height="1" fill="#bdbdbd"/><rect x="311" y="445" width="10" height="1" fill="#bdbdbd"/><rect x="311" y="457" width="3" height="1" fill="#bdbdbd"/><rect x="311" y="469" width="6" height="1" fill="#bdbdbd"/><rect x="311" y="481" width="3" height="1" fill="#bdbdbd"/><rect x="311" y="493" width="6" height="1" fill="#bdbdbd"/><rect x="311" y="505" width="3" height="1" fill="#bdbdbd"/><rect x="311" y="517" width="6" height="1" fill="#bdbdbd"/><rect x="311" y="529" width="3" height="1" fill="#bdbdbd"/><rect x="311" y="541" width="10" height="1" fill="#bdbdbd"/><rect x="311" y="553" width="3" height="1" fill="#bdbdbd"/><rect x="311" y="565" width="6" height="1" fill="#bdbdbd"/><text transform="translate(323.2 246) rotate(-90)" font-family="Liberation Sans" font-size="10" fill="#555">1</text><text transform="translate(323.2 342) rotate(-90)" font-family="Liberation Sans" font-size="10" fill="#555">2</text><text transform="translate(323.2 438) rotate(-90)" font-family="Liberation Sans" font-size="10" fill="#555">3</text><text transform="translate(323.2 534) rotate(-90)" font-family="Liberation Sans" font-size="10" fill="#555">4</text><text transform="translate(323.2 67.6) rotate(-90)" font-family="Liberation Sans" font-size="10" fill="#555">1</text><path d="M314.4 46.5 V54.5" stroke="#3d5166" stroke-width="1.3"/><path d="M316.4 46.2 L321.4 50.5 L316.4 54.8 Z" fill="#3d5166"/><circle cx="1405.6" cy="87.8" r="15" fill="#e6e6e6"/><rect x="1398.8" y="82.4" width="13.4" height="10.6" fill="none" stroke="#5a6b7c" stroke-width="1.1"/><path d="M1398.8 85.4 H1412.2 M1405.8 85.4 V93" stroke="#5a6b7c" stroke-width="1.1"/><path d="M1236.6 232.2 L1243.6 239.2" stroke="#3d5166" stroke-width="2"/><circle cx="1235.2" cy="230" r="1" fill="#5fd08a"/><path d="M1232.4 226.6 V229.4 M1231 228 H1233.8 M1239.4 226.6 V229.4 M1238 228 H1240.8 M1232.4 231.8 V234.6 M1231 233.2 H1233.8" stroke="#3d5166" stroke-width="1"/><g fill="none" stroke="#b3d1f6" stroke-width="1"><path d="M512.5 220.5 H528.5 V236.5 H512.5 Z M520.5 224 V233 M516 228.5 H525"/><path d="M532.5 220.5 H548.5 V236.5 H532.5 Z M536 224.5 H546 M536 227.5 H545 M536 230.5 H545 M536 233.5 H546"/></g><rect x="581.6" y="223.8" width="1.6" height="37.4" fill="#111"/><circle cx="1475.4" cy="63.2" r="7.8" fill="none" stroke="#3d5166" stroke-width="1.2"/><rect x="1474.8" y="61.4" width="1.3" height="5.6" fill="#3d5166"/><circle cx="1475.45" cy="59.2" r="0.75" fill="#3d5166"/><path d="M1469.4 96 H1481.4 Q1482.6 96 1482.6 97.2 V107.2 Q1482.6 108.4 1481.4 108.4 H1470.4 Q1469.2 108.4 1469.2 107.2 V98.4 M1469.4 96 Q1468.2 96 1468.2 97.4 M1469.2 99.6 Q1467 100 1467.4 104 Q1467.8 106 1469.2 106.2 M1469.4 98.4 H1482.2" fill="none" stroke="#3a78d4" stroke-width="1.2"/><circle cx="1478.8" cy="104.2" r="1.4" fill="none" stroke="#f5a623" stroke-width="1"/><circle cx="1475" cy="140.5" r="8" fill="#21759b"/><circle cx="1475" cy="140.5" r="6.6" fill="none" stroke="#fff" stroke-width="0.9"/><text x="1469.2" y="144.6" font-family="Liberation Serif" font-weight="bold" font-size="11" fill="#fff">W</text><rect x="1467" y="162" width="16.2" height="15.8" rx="2.4" fill="#f06a35"/><path d="M1471.4 166.2 H1475.8 Q1477.6 166.2 1477.6 168.2 V169 H1478.4 Q1479.4 169 1479.4 170.2 V171.6 Q1479.4 173.8 1477.2 173.8 H1473 Q1470.8 173.8 1470.8 171.6 V167 Q1470.8 166.2 1471.4 166.2 Z" fill="#fff"/><path d="M1473.2 168.6 H1475.4 M1473.2 171.4 H1477" stroke="#f06a35" stroke-width="1.1" stroke-linecap="round"/><rect x="1467" y="191" width="16.2" height="15.6" rx="2" fill="#4a90e2"/><path d="M1479.6 193.6 Q1475.6 195.6 1473.2 200.6 L1471 204.6 L1474.6 201.6 Q1478.6 198 1479.6 193.6 Z" fill="none" stroke="#fff" stroke-width="0.9"/><defs><linearGradient id="pz" x1="0" y1="0" x2="1" y2="1"><stop offset="0" stop-color="#5d39c9"/><stop offset="1" stop-color="#b152d9"/></linearGradient></defs><path d="M1468 224 H1471.6 Q1471 220.4 1473.8 220.4 Q1476.6 220.4 1476 224 H1479.4 V227.2 Q1483 226.6 1483 229.4 Q1483 232.2 1479.4 231.6 V234.8 H1476 Q1476.6 231.8 1473.8 231.8 Q1471 231.8 1471.6 234.8 H1468 Z" fill="url(#pz)"/><path d="M325 597.4 Q333 597.4 333 602.6 Q333 607.8 325 607.8 Q322.6 607.8 321.2 607.4 L318.2 611.4 L319.2 606.6 Q317 605.2 317 602.6 Q317 597.4 325 597.4 Z" fill="none" stroke="#3d5166" stroke-width="1.3" stroke-linejoin="round"/><path d="M321.2 603 H322.8 M324.2 603 H325.8 M327.2 603 H328.8" stroke="#98aeb9" stroke-width="1.6"/><text x="350" y="605.2" font-family="Liberation Sans" font-weight="bold" font-size="9" fill="#3d5166" letter-spacing="-0.4">Abc</text><path d="M352.2 606.6 L355.8 610 L363 602.8" fill="none" stroke="#4cb847" stroke-width="1.4"/><rect x="1233.1" y="601.1" width="15.8" height="9.8" rx="1" fill="#7a8a9a"/><g fill="#fff"><rect x="1234.2" y="602.2" width="1.9" height="1.9"/><rect x="1237.2" y="602.2" width="1.9" height="1.9"/><rect x="1240.2" y="602.2" width="1.9" height="1.9"/><rect x="1243.2" y="602.2" width="1.9" height="1.9"/><rect x="1246.2" y="602.2" width="1.9" height="1.9"/><rect x="1234.2" y="605.1" width="2.9" height="1.8"/><rect x="1238.1" y="605.1" width="1.9" height="1.8"/><rect x="1241.1" y="605.1" width="1.9" height="1.8"/><rect x="1244" y="605.1" width="3.9" height="1.8"/><rect x="1234.2" y="608" width="1.9" height="1.9"/><rect x="1237.1" y="608" width="7.9" height="1.9"/><rect x="1246" y="608" width="1.9" height="1.9"/></g><path d="M1265 598 V604 H1275 V598 Z" fill="#fff"/><path d="M1265 613.6 V607 H1271.6 L1275 610.4 V613.6 Z" fill="#fff"/><path d="M1265 598 V604 H1275 V598" fill="none" stroke="#3d5166" stroke-width="1.4" stroke-linecap="round"/><path d="M1265 613.6 V607 H1271.6 L1275 610.4 V613.6" fill="none" stroke="#3d5166" stroke-width="1.4" stroke-linecap="round" stroke-linejoin="round"/><path d="M1267.2 600.5 H1272.8 M1267.2 602.5 H1269.6 M1267.2 609.5 H1269.6 M1267.2 611.5 H1272.4" stroke="#a9bcc6" stroke-width="1"/><polyline points="1286.6,604.2 1290.35,608.0 1294.1000000000001,604.2" fill="none" stroke="#3a78d4" stroke-width="1.6"/><polyline points="1343.6,604.2 1347.1,608.0 1350.6000000000001,604.2" fill="none" stroke="#3a78d4" stroke-width="1.6"/><path d="M1368.4 600.4 Q1362.4 602.6 1363 607.4 Q1364 612.8 1369.6 612.6 Q1374 612.4 1376 608.8 Q1370 609.8 1368.4 605 Q1367.4 602.6 1368.4 600.4 Z" fill="#3f7bd6"/><path d="M1372 599.4 L1372.7 601.3 L1374.6 602 L1372.7 602.7 L1372 604.6 L1371.3 602.7 L1369.4 602 L1371.3 601.3 Z" fill="#f5a623"/><circle cx="1375.8" cy="605.4" r="1" fill="#f5a623"/><polyline points="1387.1,604.2 1390.6,608.0 1394.1000000000001,604.2" fill="none" stroke="#3a78d4" stroke-width="1.6"/><rect x="1406.6" y="599.6" width="14.6" height="12.8" fill="#fff" stroke="#3d5166" stroke-width="1.2"/><path d="M1406.6 602 H1421.2" stroke="#3d5166" stroke-width="1.6"/><rect x="1416.2" y="602.8" width="4.4" height="9" fill="#8d9aa5"/><path d="M1408.8 604.6 H1413 M1408.8 606.6 H1413 M1408.8 608.6 H1413 M1408.8 610.6 H1411" stroke="#a9bcc6" stroke-width="0.8"/><path d="M1436.6 600.6 H1443.4 V612 H1436.6 Z M1444.6 600.6 H1451.4 V612 H1444.6 Z" fill="none" stroke="#fff" stroke-width="1.2"/><path d="M1443.4 600 H1444.6 V613 H1443.4 Z" fill="#fff"/><path d="M1438 603.4 H1442 M1438 605.4 H1442 M1438 607.4 H1442 M1446 603.4 H1450 M1446 605.4 H1450 M1446 607.4 H1450" stroke="#fff" stroke-width="1"/><path d="M1466.6 599.6 H1481.6 V609.6 H1471 L1466.8 613.6 Z M1466.8 599.8 L1474.1 605 L1481.4 599.8 M1466.8 609.4 L1471.4 605.2 M1481.4 609.4 L1476.8 605.2" fill="none" stroke="#3a78d4" stroke-width="1.1" stroke-linejoin="round"/></svg>
<div class="a t" style="left:111.25px;top:16.14px;font-size:11.26px;transform:scaleX(0.9828);color:#fff;-webkit-text-stroke:0.3px currentColor">ファイル</div>
<div class="a t" style="left:214.23px;top:17.43px;font-size:12.5px;transform:scaleX(1.0699);color:#111;-webkit-text-stroke:0.3px currentColor">無題の文書</div>
<div class="a t" style="left:328.01px;top:16.96px;font-size:10.41px;transform:scaleX(1.1152);color:#fff;-webkit-text-stroke:0.3px currentColor">準備完了</div>
<div class="a t" style="left:416.03px;top:15.69px;font-size:12.3px;transform:scaleX(1.0403);color:#9aa3ad;-webkit-text-stroke:0.3px currentColor">Saved</div>
<div class="a t" style="left:1234.55px;top:15.9px;font-size:10.62px;transform:scaleX(0.9632);color:#111;font-weight:normal;-webkit-text-stroke:0.75px currentColor">作成</div>
<div class="a t" style="left:1338.3px;top:16.65px;font-size:11.33px;transform:scaleX(0.9514);color:#3d8ae8;font-weight:normal;-webkit-text-stroke:0.75px currentColor">共有</div>
<div class="a t" style="left:69.52px;top:57.15px;font-size:12.77px;transform:scaleX(1.1266);color:#5f5f5f;font-weight:normal;-webkit-text-stroke:0.75px currentColor">編集する</div>
<div class="a t" style="left:100.43px;top:123.96px;font-size:12.93px;transform:scaleX(0.9776);color:#111;-webkit-text-stroke:0.3px currentColor">Quick Parts</div>
<div class="a t" style="left:68.26px;top:158.94px;font-size:16.11px;transform:scaleX(0.9338);color:#5f5f5f;font-weight:normal;-webkit-text-stroke:0.75px currentColor">スタイル</div>
<div class="a t" style="left:75.75px;top:193.55px;font-size:22.32px;transform:scaleX(1.12);color:#111;-webkit-text-stroke:0.2px currentColor">標準*</div>
<div class="a t" style="left:69.34px;top:242.25px;font-size:15.29px;transform:scaleX(1.0276);color:#5f5f5f;font-weight:normal;-webkit-text-stroke:0.75px currentColor">フォント</div>
<div class="a t" style="left:75.5px;top:273.49px;font-size:13.24px;transform:scaleX(0.9936);color:#111;-webkit-text-stroke:0.3px currentColor">Roboto</div>
<div class="a t" style="left:200.5px;top:272.65px;font-size:14.43px;transform:scaleX(0.9226);color:#111;-webkit-text-stroke:0.3px currentColor">24</div>
<div class="a t" style="left:225.52px;top:351.16px;font-size:11.72px;transform:scaleX(1.0513);color:#111;-webkit-text-stroke:0.3px currentColor">初期設定...</div>
<div class="a t" style="left:69.04px;top:388.33px;font-size:14.17px;transform:scaleX(1.0311);color:#5f5f5f;font-weight:normal;-webkit-text-stroke:0.75px currentColor">段落</div>
<div class="a t" style="left:201.43px;top:495.26px;font-size:13.92px;transform:scaleX(0.891);color:#111;-webkit-text-stroke:0.3px currentColor">Borders and S...</div>
<div class="a t" style="left:263.48px;top:534.5px;font-size:11.87px;transform:scaleX(1.0539);color:#111;-webkit-text-stroke:0.3px currentColor">詳細</div>
<div class="a t" style="left:23.02px;top:88.14px;font-size:7.77px;transform:scaleX(1.0044);color:#fff;font-weight:normal;-webkit-text-stroke:0.35px currentColor">書式</div>
<div class="a t" style="left:14.87px;top:143.62px;font-size:7.28px;transform:scaleX(1.1806);color:#c4c4c4;-webkit-text-stroke:0.3px currentColor">挿入する</div>
<div class="a t" style="left:22.47px;top:199.62px;font-size:8.35px;transform:scaleX(1.0521);color:#c4c4c4;-webkit-text-stroke:0.3px currentColor">項目</div>
<div class="a t" style="left:14.95px;top:256.52px;font-size:7.47px;transform:scaleX(1.1549);color:#c4c4c4;-webkit-text-stroke:0.3px currentColor">デザイン</div>
<div class="a t" style="left:10.51px;top:316.97px;font-size:7.17px;transform:scaleX(1.1281);color:#c4c4c4;-webkit-text-stroke:0.3px currentColor">ページ設定</div>
<div class="a t" style="left:23.04px;top:372.42px;font-size:7.68px;transform:scaleX(1.0792);color:#c4c4c4;-webkit-text-stroke:0.3px currentColor">表示</div>
<div class="a t" style="left:19.17px;top:426.58px;font-size:9.48px;transform:scaleX(0.8783);color:#c4c4c4;-webkit-text-stroke:0.3px currentColor">ツール</div>
<div class="a t" style="left:18.66px;top:485.39px;font-size:7.87px;transform:scaleX(1.0456);color:#c4c4c4;-webkit-text-stroke:0.3px currentColor">自動化</div>
<div class="a t" style="left:581.08px;top:164.16px;font-size:30.0px;transform:scaleX(1.0495);color:#111;-webkit-text-stroke:0.2px currentColor">クラウドで使える</div>
<div class="a t" style="left:582.07px;top:226.06px;font-size:30.31px;transform:scaleX(1.0494);color:#111;-webkit-text-stroke:0.2px currentColor">オンライン文書作成ツール！</div>
<div class="a t" style="left:421.85px;top:598.25px;font-size:12.19px;transform:scaleX(1.1077);color:#3d7cc9;-webkit-text-stroke:0.3px currentColor">日本語</div>
<div class="a t" style="left:482.05px;top:598.33px;font-size:12.29px;transform:scaleX(1.0802);color:#111;-webkit-text-stroke:0.3px currentColor">単語:</div>
<div class="a t" style="left:516.24px;top:598.87px;font-size:11.86px;transform:scaleX(0.9743);color:#3d7cc9;-webkit-text-stroke:0.3px currentColor">2</div>
<div class="a t" style="left:533.37px;top:598.58px;font-size:12.04px;transform:scaleX(1.0691);color:#111;-webkit-text-stroke:0.3px currentColor">文字:</div>
<div class="a t" style="left:568.25px;top:598.87px;font-size:11.86px;transform:scaleX(1.1223);color:#3d7cc9;-webkit-text-stroke:0.3px currentColor">21</div>
<div class="a t" style="left:603.78px;top:597.37px;font-size:13.17px;transform:scaleX(0.993);color:#111;-webkit-text-stroke:0.3px currentColor">ページ:</div>
<div class="a t" style="left:659.31px;top:596.79px;font-size:14.64px;transform:scaleX(1.0);color:#3d7cc9;-webkit-text-stroke:0.3px currentColor">1</div>
<div class="a t" style="left:680.64px;top:597.99px;font-size:13.96px;transform:scaleX(1.0);color:#3d7cc9;-webkit-text-stroke:0.3px currentColor">:</div>
<div class="a t" style="left:691.3px;top:596.79px;font-size:14.64px;transform:scaleX(1.0);color:#3d7cc9;-webkit-text-stroke:0.3px currentColor">1</div>
<div class="a t" style="left:1129.27px;top:600.89px;font-size:11.94px;transform:scaleX(1.0934);color:#111;-webkit-text-stroke:0.3px currentColor">変更履歴</div>
<div class="a t" style="left:1305.6px;top:598.45px;font-size:14.08px;transform:scaleX(0.9223);color:#111;-webkit-text-stroke:0.3px currentColor">100%</div>
</body></html>
